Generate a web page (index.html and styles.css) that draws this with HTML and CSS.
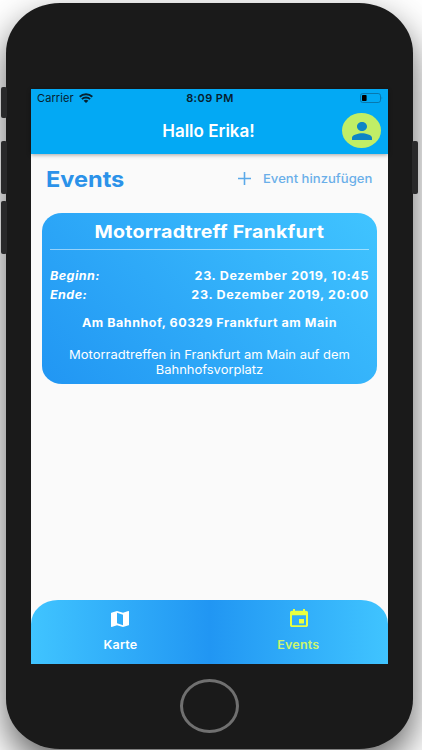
FILE: index.html
```
<!DOCTYPE html>
<html lang="de">
<head>
    <meta charset="UTF-8">
    <meta name="viewport" content="width=device-width, initial-scale=1.0">
    <title>Events</title>
    <link rel="stylesheet" href="styles.css">
</head>
<body>
    <div class="phone">
        <span class="side-btn mute"></span>
        <span class="side-btn volume-up"></span>
        <span class="side-btn volume-down"></span>
        <span class="side-btn power"></span>

        <div class="screen">
            <header class="header">
                <div class="status-bar">
                    <div class="carrier">
                        <span>Carrier</span>
                        <svg class="wifi" viewBox="0 0 14 10" preserveAspectRatio="none">
                            <path d="M.7 3.7C4.2.4 9.8.4 13.3 3.7M2.9 6.1C5.2 4 8.8 4 11.1 6.1" fill="none" stroke="#06202e" stroke-width="1.9"/>
                            <path d="M4.6 7.7C6 6.4 8 6.4 9.4 7.7L7 10Z" fill="#06202e"/>
                        </svg>
                    </div>
                    <span class="time">8:09 PM</span>
                    <svg class="battery" viewBox="0 0 23 10">
                        <rect x=".5" y=".5" width="20" height="9" rx="2.3" fill="none" stroke="#0878ae"/>
                        <rect x="2" y="2" width="4.6" height="6" rx=".8" fill="#000"/>
                        <path d="M21.6 3.5Q23 5 21.6 6.5Z" fill="#0878ae"/>
                    </svg>
                </div>
                <div class="app-bar">
                    <h1>Hallo Erika!</h1>
                    <div class="avatar">
                        <svg viewBox="4 4 16 16" preserveAspectRatio="none">
                            <path d="M12 12c2.21 0 4-1.79 4-4s-1.79-4-4-4-4 1.79-4 4 1.79 4 4 4zm0 2c-2.67 0-8 1.34-8 4v2h16v-2c0-2.66-5.33-4-8-4z" fill="#0d85c5"/>
                        </svg>
                    </div>
                </div>
            </header>

            <main class="main-content">
                <div class="title-row">
                    <h2>Events</h2>
                    <div class="add-event">
                        <svg viewBox="0 0 14 14"><path d="M7 0v14M0 7h14" stroke="#5aa9e9" stroke-width="1.7"/></svg>
                        <span>Event hinzufügen</span>
                    </div>
                </div>

                <section class="event-card">
                    <h3><span>Motorradtreff Frankfurt</span></h3>
                    <div class="date-row"><em>Beginn:</em><span>23. Dezember 2019, 10:45</span></div>
                    <div class="date-row"><em>Ende:</em><span>23. Dezember 2019, 20:00</span></div>
                    <p class="address">Am Bahnhof, 60329 Frankfurt am Main</p>
                    <p class="description">Motorradtreffen in Frankfurt am Main auf dem<br>Bahnhofsvorplatz</p>
                </section>
            </main>

            <nav class="bottom-nav">
                <div class="nav-item">
                    <svg viewBox="3 3 18 18" preserveAspectRatio="none">
                        <path d="M20.5 3l-.16.03L15 5.1 9 3 3.36 4.9c-.21.07-.36.25-.36.48V20.5c0 .28.22.5.5.5l.16-.03L9 18.9l6 2.1 5.64-1.9c.21-.07.36-.25.36-.48V3.5c0-.28-.22-.5-.5-.5zM15 19l-6-2.11V5l6 2.11V19z" fill="#fff"/>
                    </svg>
                    <span>Karte</span>
                </div>
                <div class="nav-item active">
                    <svg viewBox="3 1 18 20" preserveAspectRatio="none">
                        <path d="M17 12h-5v5h5v-5zM16 1v2H8V1H6v2H5c-1.11 0-1.99.9-1.99 2L3 19c0 1.1.89 2 2 2h14c1.1 0 2-.9 2-2V5c0-1.1-.9-2-2-2h-1V1h-2zm3 18H5V8h14v11z" fill="#eaff3f"/>
                    </svg>
                    <span>Events</span>
                </div>
            </nav>
        </div>
        <div class="home-btn"></div>
    </div>
</body>
</html>
```
FILE: styles.css
```
* {
    margin: 0;
    padding: 0;
    box-sizing: border-box;
}

body {
    background: #fff;
    height: 750px;
    padding: 3px 8px 1px 6px;
    overflow: hidden;
    font-family: Inter, "Liberation Sans", sans-serif;
}

svg {
    display: block;
}

.phone {
    position: relative;
    width: 407px;
    height: 746px;
    padding: 86px 25px 0;
    background: #1a1a1a;
    border-radius: 54px / 50px;
    box-shadow: 0 16px 36px rgba(0,0,0,0.62);
}

.side-btn {
    position: absolute;
    left: -5px;
    width: 6px;
    height: 53px;
    background: #29292a;
    border-radius: 2px;
}

.mute {
    top: 84px;
    height: 31px;
}

.volume-up {
    top: 138px;
}

.volume-down {
    top: 198px;
}

.power {
    top: 138px;
    left: auto;
    right: -5px;
}

.screen {
    width: 357px;
    height: 574.5px;
    display: flex;
    flex-direction: column;
    background: #fafafa;
}

.header {
    height: 65px;
    background: #03a9f4;
    box-shadow: 0 1px 4px rgba(0,0,0,0.35);
}

.status-bar {
    height: 18px;
    display: grid;
    grid-template-columns: 1fr auto 1fr;
    align-items: center;
    padding: 0 5px 0 6px;
    font-size: 11px;
    color: #06202e;
}

.carrier {
    display: flex;
    align-items: center;
    gap: 5px;
    letter-spacing: 0.1px;
}

.wifi {
    width: 14px;
    height: 10px;
}

.time {
    font-weight: 600;
    letter-spacing: 0.4px;
}

.battery {
    width: 23px;
    height: 10px;
    justify-self: end;
}

.app-bar {
    height: 47px;
    display: grid;
    grid-template-columns: 39px 1fr 39px;
    align-items: center;
    padding: 0 7px;
}

.app-bar h1 {
    grid-column: 2;
    text-align: center;
    font-size: 17px;
    font-weight: 600;
    line-height: 24px;
    color: #fff;
    transform: translateX(-1px);
}

.avatar {
    width: 39px;
    height: 35px;
    display: flex;
    align-items: center;
    justify-content: center;
    background: #c0ee66;
    border-radius: 50%;
}

.avatar svg {
    width: 20px;
    height: 18px;
}

.main-content {
    flex: 1;
    padding: 0 11px;
}

.title-row {
    height: 59px;
    display: flex;
    justify-content: space-between;
    align-items: center;
    padding: 0 5px 9px 4px;
}

.title-row h2 {
    font-size: 22px;
    font-weight: 700;
    line-height: 26px;
    color: #2b92e9;
    transform: scaleX(1.07);
    transform-origin: left;
}

.add-event {
    display: flex;
    align-items: center;
    gap: 21px;
    padding-bottom: 2px;
    font-size: 12px;
    font-weight: 500;
    color: #6aafe9;
}

.add-event span {
    transform: scaleX(1.09);
    transform-origin: right;
}

.add-event svg {
    width: 13px;
    height: 13px;
}

.event-card {
    height: 171px;
    padding: 5px 8px 0;
    color: #fff;
    background: linear-gradient(45deg, #2196f3, #40c4ff);
    border-radius: 20px / 18px;
}

.event-card h3 {
    height: 32px;
    margin-bottom: 17px;
    border-bottom: 1px solid rgba(255,255,255,0.5);
    text-align: center;
    font-size: 18px;
    font-weight: 700;
    line-height: 27px;
}

.event-card h3 span {
    display: inline-block;
    letter-spacing: 0.2px;
    transform: scaleX(1.09);
}

.date-row {
    display: flex;
    justify-content: space-between;
    font-size: 11.5px;
    font-weight: 700;
    line-height: 19px;
}

.date-row em {
    letter-spacing: 0.4px;
    transform: scaleX(1.09);
    transform-origin: left;
}

.date-row span {
    letter-spacing: 0.6px;
    transform: scaleX(1.09);
    transform-origin: right;
}

.address {
    margin-top: 9px;
    text-align: center;
    font-size: 11.5px;
    font-weight: 700;
    line-height: 19px;
    letter-spacing: 0.47px;
    transform: scaleX(1.09);
}

.description {
    margin-top: 14px;
    text-align: center;
    font-size: 12px;
    line-height: 15px;
    transform: scaleX(1.08);
}

.bottom-nav {
    height: 63.5px;
    display: flex;
    background: linear-gradient(90deg, #40c4ff, #2196f3 50%, #40c4ff);
    border-radius: 27px 27px 0 0 / 24px 24px 0 0;
}

.nav-item {
    flex: 1;
    display: flex;
    flex-direction: column;
    align-items: center;
    padding-top: 11px;
    font-size: 11.5px;
    font-weight: 600;
    color: #fff;
}

.nav-item svg {
    width: 18px;
    height: 16px;
    margin-bottom: 11px;
}

.nav-item span {
    line-height: 15px;
    letter-spacing: 0.15px;
    transform: scaleX(1.09);
}

.nav-item.active {
    padding-top: 9px;
    color: #cdf56e;
}

.nav-item.active svg {
    height: 18px;
}

.home-btn {
    width: 59px;
    height: 54px;
    margin: 15px auto 0;
    border: 3px solid #707070;
    border-radius: 50%;
}
```
